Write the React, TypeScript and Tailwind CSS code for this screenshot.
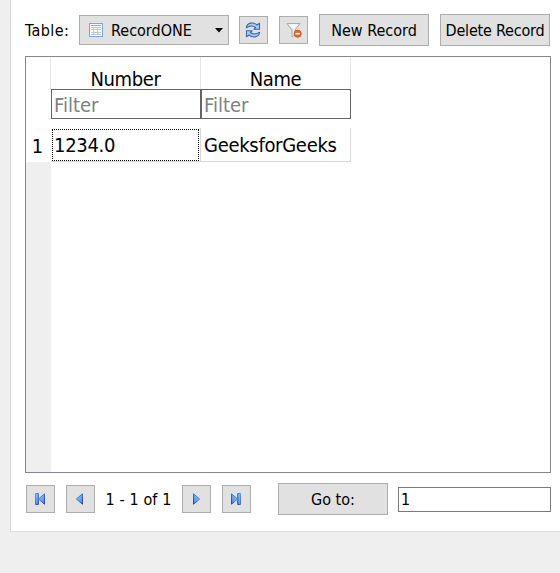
import type { ReactNode } from 'react';

function IconButton({ children, className = '' }: { children: ReactNode; className?: string }) {
  return (
    <button className={`flex h-7 w-[29px] shrink-0 items-center justify-center border border-[#adadad] bg-[#e1e1e1] ${className}`}>
      {children}
    </button>
  );
}

function TextButton({ children, className = '' }: { children: ReactNode; className?: string }) {
  return (
    <button className={`flex h-8 w-[110px] shrink-0 items-center justify-center border border-[#adadad] bg-[#e1e1e1] pt-0.5 whitespace-nowrap ${className}`}>
      {children}
    </button>
  );
}

function TableIcon() {
  return (
    <svg width="16" height="16" viewBox="0 0 16 16" shapeRendering="crispEdges">
      <path d="M1.5 1.5h13v13h-13z" fill="#f7faff" stroke="#78a5dc" />
      <path d="M3 3h10v1H3z" fill="#7fc576" />
      <path d="M3 5.5h10M3 7.5h10M3 10.5h10M3 12.5h10M5.5 5v8M9.5 5v8" stroke="#bac8da" />
    </svg>
  );
}

function RefreshIcon() {
  return (
    <svg width="16" height="16" viewBox="0 0 16 16" className="-translate-x-px">
      <g fill="#a8cbf0" stroke="#3268b4" strokeWidth="1.1" strokeLinejoin="round">
        <path d="M1.3 5.7C2 .5 8.3-.3 12 3l2.5-1.7v6H8.8L10.6 5.5C8 3.5 4.5 3.8 1.3 5.7Z" />
        <path d="M14.7 10.3C14 15.5 7.7 16.3 4 13l-2.5 1.7v-6h5.7L5.4 10.5c2.6 2 6.1 1.7 9.3-.2Z" />
      </g>
    </svg>
  );
}

function ClearFilterIcon() {
  return (
    <svg width="16" height="16" viewBox="0 0 16 16">
      <path d="M1 1.5h13L9.2 8v4.5L6 15V8Z" fill="#e8e8e8" stroke="#aaa" />
      <path d="M2.5 2.5h9L7.5 7Z" fill="#fff" />
      <circle cx="11.7" cy="11.7" r="3.6" fill="#e66b22" stroke="#c94b0c" strokeWidth=".7" />
      <path d="M9.5 11.7h4.4" stroke="#fff" strokeWidth="1.6" />
    </svg>
  );
}

function NavIcon({ name, end = false, flip = false }: { name: string; end?: boolean; flip?: boolean }) {
  return (
    <svg width="16" height="16" viewBox="0 0 16 16" className="-translate-x-px">
      <defs>
        <linearGradient id={name} x2="1" y2="1">
          <stop stopColor="#9ac8f4" />
          <stop offset="1" stopColor="#4387df" />
        </linearGradient>
        <linearGradient id={`${name}-edge`} x2="1" y2="1">
          <stop stopColor="#609ae0" />
          <stop offset="1" stopColor="#1747b7" />
        </linearGradient>
      </defs>
      <g transform={flip ? 'translate(16 0) scale(-1 1)' : undefined} fill={`url(#${name})`} stroke={`url(#${name}-edge)`}>
        {end ? (
          <>
            <path d="M3.5 2.5h2.8v11H3.5Z" />
            <path d="M12.5 2.8v10.4L6.5 8Z" />
          </>
        ) : (
          <path d="M10.5 2.8v10.4L4.3 8Z" />
        )}
      </g>
    </svg>
  );
}

function Column({ title, value, selected = false }: { title: string; value: string; selected?: boolean }) {
  return (
    <div className="w-[150px] text-xl leading-6">
      <div className="flex h-8 items-end justify-center border-r border-[#e5e5e5]">
        <span className="translate-y-0.5 tracking-[-0.4px]">{title}</span>
      </div>
      <input
        aria-label={title}
        placeholder="Filter"
        className="block h-[30px] w-[150px] border border-[#646464] px-0.5 pt-0.5 outline-none placeholder:text-[#808080]"
      />
      <div className="mt-[9px] h-[34px] border-r border-b border-[#d8d8d8] pt-px pr-px">
        <div className={`flex h-8 items-center ${selected ? 'ml-px border border-dotted border-black pl-px' : 'border border-transparent pl-0.5'}`}>
          <span className="tracking-[-0.3px]">{value}</span>
        </div>
      </div>
    </div>
  );
}

export default function App() {
  return (
    <div className="h-[573px] w-[560px] overflow-hidden bg-[#efefef] pl-2.5 font-['DejaVu_Sans_Condensed','DejaVu_Sans',sans-serif] text-base leading-6 text-black">
      <main className="h-[532px] border-b border-l border-[#d9d9d9] bg-white pl-3.5">
        <div className="flex h-[56px] items-center pt-1">
          <label className="w-[54px] pt-0.5 tracking-[0.4px]"><span>Table:</span></label>
          <button className="flex h-[30px] w-[150px] items-center border border-[#adadad] bg-[#e1e1e1] pl-2">
            <TableIcon />
            <span className="ml-[7px] pt-0.5">RecordONE</span>
            <svg width="8" height="5" viewBox="0 0 8 5" className="mr-[5px] ml-auto"><path d="M0 0h8L4 4.5Z" /></svg>
          </button>
          <IconButton className="ml-2.5"><RefreshIcon /></IconButton>
          <IconButton className="ml-[11px]"><ClearFilterIcon /></IconButton>
          <TextButton className="ml-[11px]"><span>New Record</span></TextButton>
          <TextButton className="ml-[11px]"><span className="tracking-[-0.2px]">Delete Record</span></TextButton>
        </div>

        <section className="flex h-[417px] w-[526px] border border-[#828790]">
          <div className="flex h-full w-[25px] flex-col text-xl leading-6">
            <div className="h-[71px] shrink-0 pl-6"><div className="h-8 w-px bg-[#e5e5e5]" /></div>
            <div className="flex h-[34px] shrink-0 items-center justify-center pt-0.5 pr-0.5">1</div>
            <div className="flex-1 bg-[#efefef]" />
          </div>
          <Column title="Number" value="1234.0" selected />
          <Column title="Name" value="GeeksforGeeks" />
        </section>

        <footer className="flex h-[52px] items-center pl-px">
          <IconButton><NavIcon name="first" end /></IconButton>
          <IconButton className="ml-[11px]"><NavIcon name="previous" /></IconButton>
          <span className="w-[87px] pt-0.5 text-center tracking-[0.1px]">1 - 1 of 1</span>
          <IconButton><NavIcon name="next" flip /></IconButton>
          <IconButton className="ml-[11px]"><NavIcon name="last" end flip /></IconButton>
          <TextButton className="ml-[27px]"><span>Go to:</span></TextButton>
          <input aria-label="Record number" defaultValue="1" className="ml-2.5 h-[25px] w-[153px] border border-[#7a7a7a] px-0.5 outline-none" />
        </footer>
      </main>
    </div>
  );
}
